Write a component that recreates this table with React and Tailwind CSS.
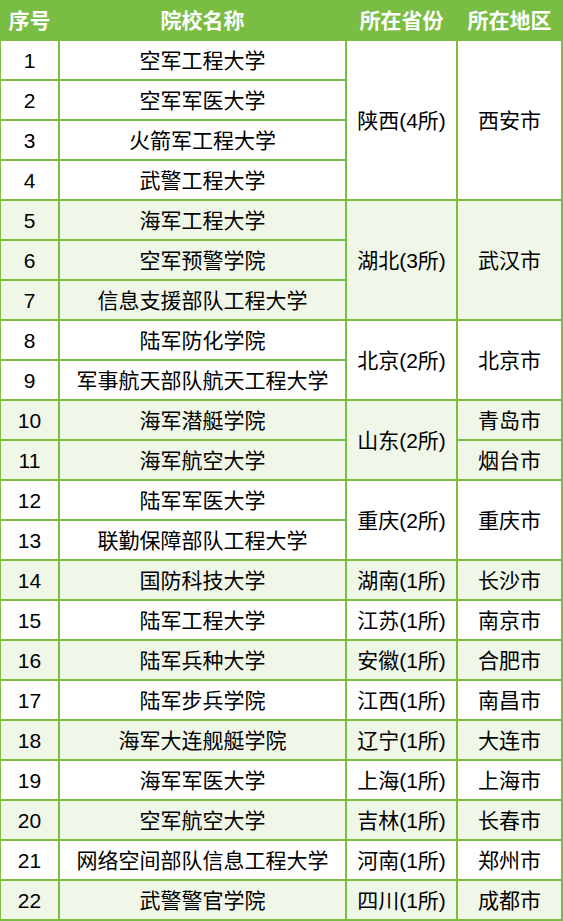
const groups = [
  {
    province: "陕西(4所)",
    span: "row-span-4",
    rows: [
      [1, "空军工程大学"],
      [2, "空军军医大学"],
      [3, "火箭军工程大学"],
      [4, "武警工程大学"],
    ],
    cities: ["西安市"],
  },
  {
    province: "湖北(3所)",
    span: "row-span-3",
    rows: [
      [5, "海军工程大学"],
      [6, "空军预警学院"],
      [7, "信息支援部队工程大学"],
    ],
    cities: ["武汉市"],
  },
  {
    province: "北京(2所)",
    span: "row-span-2",
    rows: [
      [8, "陆军防化学院"],
      [9, "军事航天部队航天工程大学"],
    ],
    cities: ["北京市"],
  },
  {
    province: "山东(2所)",
    span: "row-span-2",
    rows: [
      [10, "海军潜艇学院"],
      [11, "海军航空大学"],
    ],
    cities: ["青岛市", "烟台市"],
  },
  {
    province: "重庆(2所)",
    span: "row-span-2",
    rows: [
      [12, "陆军军医大学"],
      [13, "联勤保障部队工程大学"],
    ],
    cities: ["重庆市"],
  },
  { province: "湖南(1所)", span: "", rows: [[14, "国防科技大学"]], cities: ["长沙市"] },
  { province: "江苏(1所)", span: "", rows: [[15, "陆军工程大学"]], cities: ["南京市"] },
  { province: "安徽(1所)", span: "", rows: [[16, "陆军兵种大学"]], cities: ["合肥市"] },
  { province: "江西(1所)", span: "", rows: [[17, "陆军步兵学院"]], cities: ["南昌市"] },
  { province: "辽宁(1所)", span: "", rows: [[18, "海军大连舰艇学院"]], cities: ["大连市"] },
  { province: "上海(1所)", span: "", rows: [[19, "海军军医大学"]], cities: ["上海市"] },
  { province: "吉林(1所)", span: "", rows: [[20, "空军航空大学"]], cities: ["长春市"] },
  { province: "河南(1所)", span: "", rows: [[21, "网络空间部队信息工程大学"]], cities: ["郑州市"] },
  { province: "四川(1所)", span: "", rows: [[22, "武警警官学院"]], cities: ["成都市"] },
];

const cellBase =
  "flex items-center justify-center border-r-2 border-b-2 border-[#79bd42]";

function Cell({ shade, span = "", children }) {
  return (
    <div className={`${cellBase} ${span} ${shade ? "bg-[#f0f7e9]" : "bg-white"}`}>
      {children}
    </div>
  );
}

function Group({ group, shade }) {
  const cityShared = group.cities.length === 1;
  return group.rows.map(([no, name], i) => (
    <React.Fragment key={no}>
      <Cell shade={shade}>{no}</Cell>
      <Cell shade={shade}>{name}</Cell>
      {i === 0 && (
        <Cell shade={shade} span={group.span}>
          {group.province}
        </Cell>
      )}
      {cityShared && i === 0 && (
        <Cell shade={shade} span={group.span}>
          {group.cities[0]}
        </Cell>
      )}
      {!cityShared && <Cell shade={shade}>{group.cities[i]}</Cell>}
    </React.Fragment>
  ));
}

import React from "react";

export default function App() {
  return (
    <div className="w-[563px] bg-[#79bd42] pl-px text-[21px] leading-none text-black font-['Liberation_Sans','Noto_Sans_CJK_SC',sans-serif]">
      <div className="grid grid-cols-[59px_287px_111px_105px] grid-rows-[41px_repeat(22,40px)]">
        <div className="flex items-center justify-center pb-px pr-[2px] font-bold text-white">序号</div>
        <div className="flex items-center justify-center pb-px pr-[2px] font-bold text-white">院校名称</div>
        <div className="flex items-center justify-center pb-px pr-[2px] font-bold text-white">所在省份</div>
        <div className="flex items-center justify-center pb-px pr-[2px] font-bold text-white">所在地区</div>
        {groups.map((g, gi) => (
          <Group key={g.province} group={g} shade={gi % 2 === 1} />
        ))}
      </div>
    </div>
  );
}
